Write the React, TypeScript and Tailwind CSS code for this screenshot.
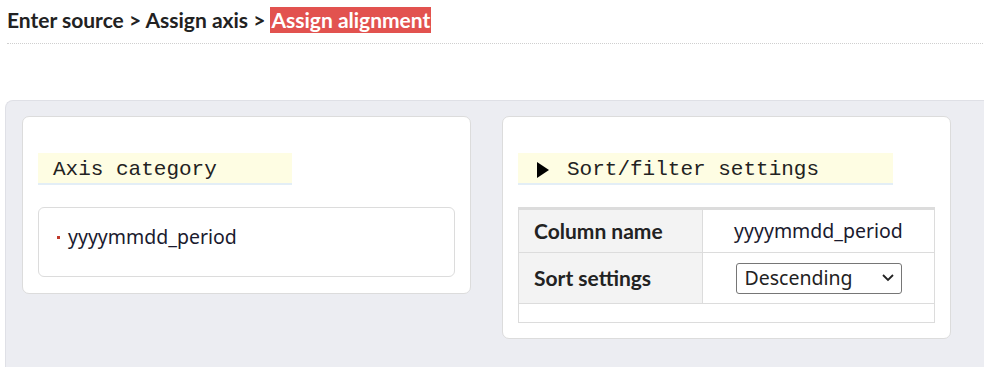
import React from "react";

export default function App() {
  return (
    <div className="w-[984px] h-[367px] overflow-hidden bg-white" style={{ fontFamily: "Lato, 'Noto Sans', sans-serif" }}>
      <div className="ml-[7px] mr-[1px] pt-[7px] pb-[10px] border-b border-dotted border-[#cfcfcf]">
        <div className="text-[21px] leading-[26px] font-bold text-[#222] font-['Lato',sans-serif]">
          Enter source &gt; Assign axis &gt; <span className="bg-[#e2524f] text-white px-[1px] inline-block">Assign alignment</span>
        </div>
      </div>
      <div className="ml-[5px] mt-[56px] h-[300px] rounded-tl-[8px] border-l border-t border-[#dfe0e6] bg-[#ecedf2] pl-[16px] pt-[15px]">
        <div className="flex items-start gap-[31px]">
          {/* Left card */}
          <div className="w-[449px] bg-white border border-[#dcdcdc] rounded-[7px] px-[15px] pt-[36px] pb-[16px]">
            <div className="w-[254px] h-[32px] bg-[#fefde3] border-b-2 border-[#e3eef6] pl-[15px] pt-[4px] flex items-center text-[21px] text-[#222] font-['Liberation_Mono',monospace]">
              Axis category
            </div>
            <div className="mt-[22px] h-[70px] border border-[#dcdcdc] rounded-[6px] pl-[18px] pt-[14px]">
              <div className="flex items-center h-[30px] text-[19.5px] text-[#1a1a2e] font-['Noto_Sans',sans-serif]">
                <span className="inline-block w-[3px] h-[3px] bg-[#c0392b] mr-[8px]"></span>
                yyyymmdd_period
              </div>
            </div>
          </div>
          {/* Right card */}
          <div className="w-[449px] bg-white border border-[#dcdcdc] rounded-[7px] px-[15px] pt-[36px] pb-[15px]">
            <div className="w-[375px] h-[32px] bg-[#fefde3] border-b-2 border-[#e3eef6] pl-[19px] pt-[4px] flex items-center text-[21px] text-[#222] font-['Liberation_Mono',monospace]">
              <svg width="12" height="16" viewBox="0 0 12 16" className="mr-[18px]">
                <polygon points="0,0 12,8 0,16" fill="#000" />
              </svg>
              Sort/filter settings
            </div>
            <div className="mt-[22px] w-[417px] border-t-[3px] border-[#dcdcdc]">
              <div className="border-l border-r border-b border-[#dcdcdc]">
                <div className="flex h-[43px] border-b border-[#dcdcdc]">
                  <div className="w-[184px] bg-[#f3f3f3] border-r border-[#dcdcdc] pl-[15px] flex items-center text-[21px] font-bold text-[#222] font-['Lato',sans-serif]">
                    Column name
                  </div>
                  <div className="flex-1 flex items-center justify-center text-[19.5px] text-[#1a1a2e] font-['Noto_Sans',sans-serif]">
                    yyyymmdd_period
                  </div>
                </div>
                <div className="flex h-[51px] border-b border-[#dcdcdc]">
                  <div className="w-[184px] bg-[#f3f3f3] border-r border-[#dcdcdc] pl-[15px] flex items-center text-[21px] font-bold text-[#222] font-['Lato',sans-serif]">
                    Sort settings
                  </div>
                  <div className="flex-1 flex items-center justify-center">
                    <div className="w-[166px] h-[31px] border border-[#767676] rounded-[3px] flex items-center justify-between pl-[8px] pr-[7px] text-[19.5px] text-[#222] font-['Noto_Sans',sans-serif]">
                      <span>Descending</span>
                      <svg width="12" height="8" viewBox="0 0 12 8">
                        <polyline points="1,1 6,6 11,1" fill="none" stroke="#222" strokeWidth="1.8" />
                      </svg>
                    </div>
                  </div>
                </div>
                <div className="h-[18px]"></div>
              </div>
            </div>
          </div>
        </div>
      </div>
    </div>
  );
}
